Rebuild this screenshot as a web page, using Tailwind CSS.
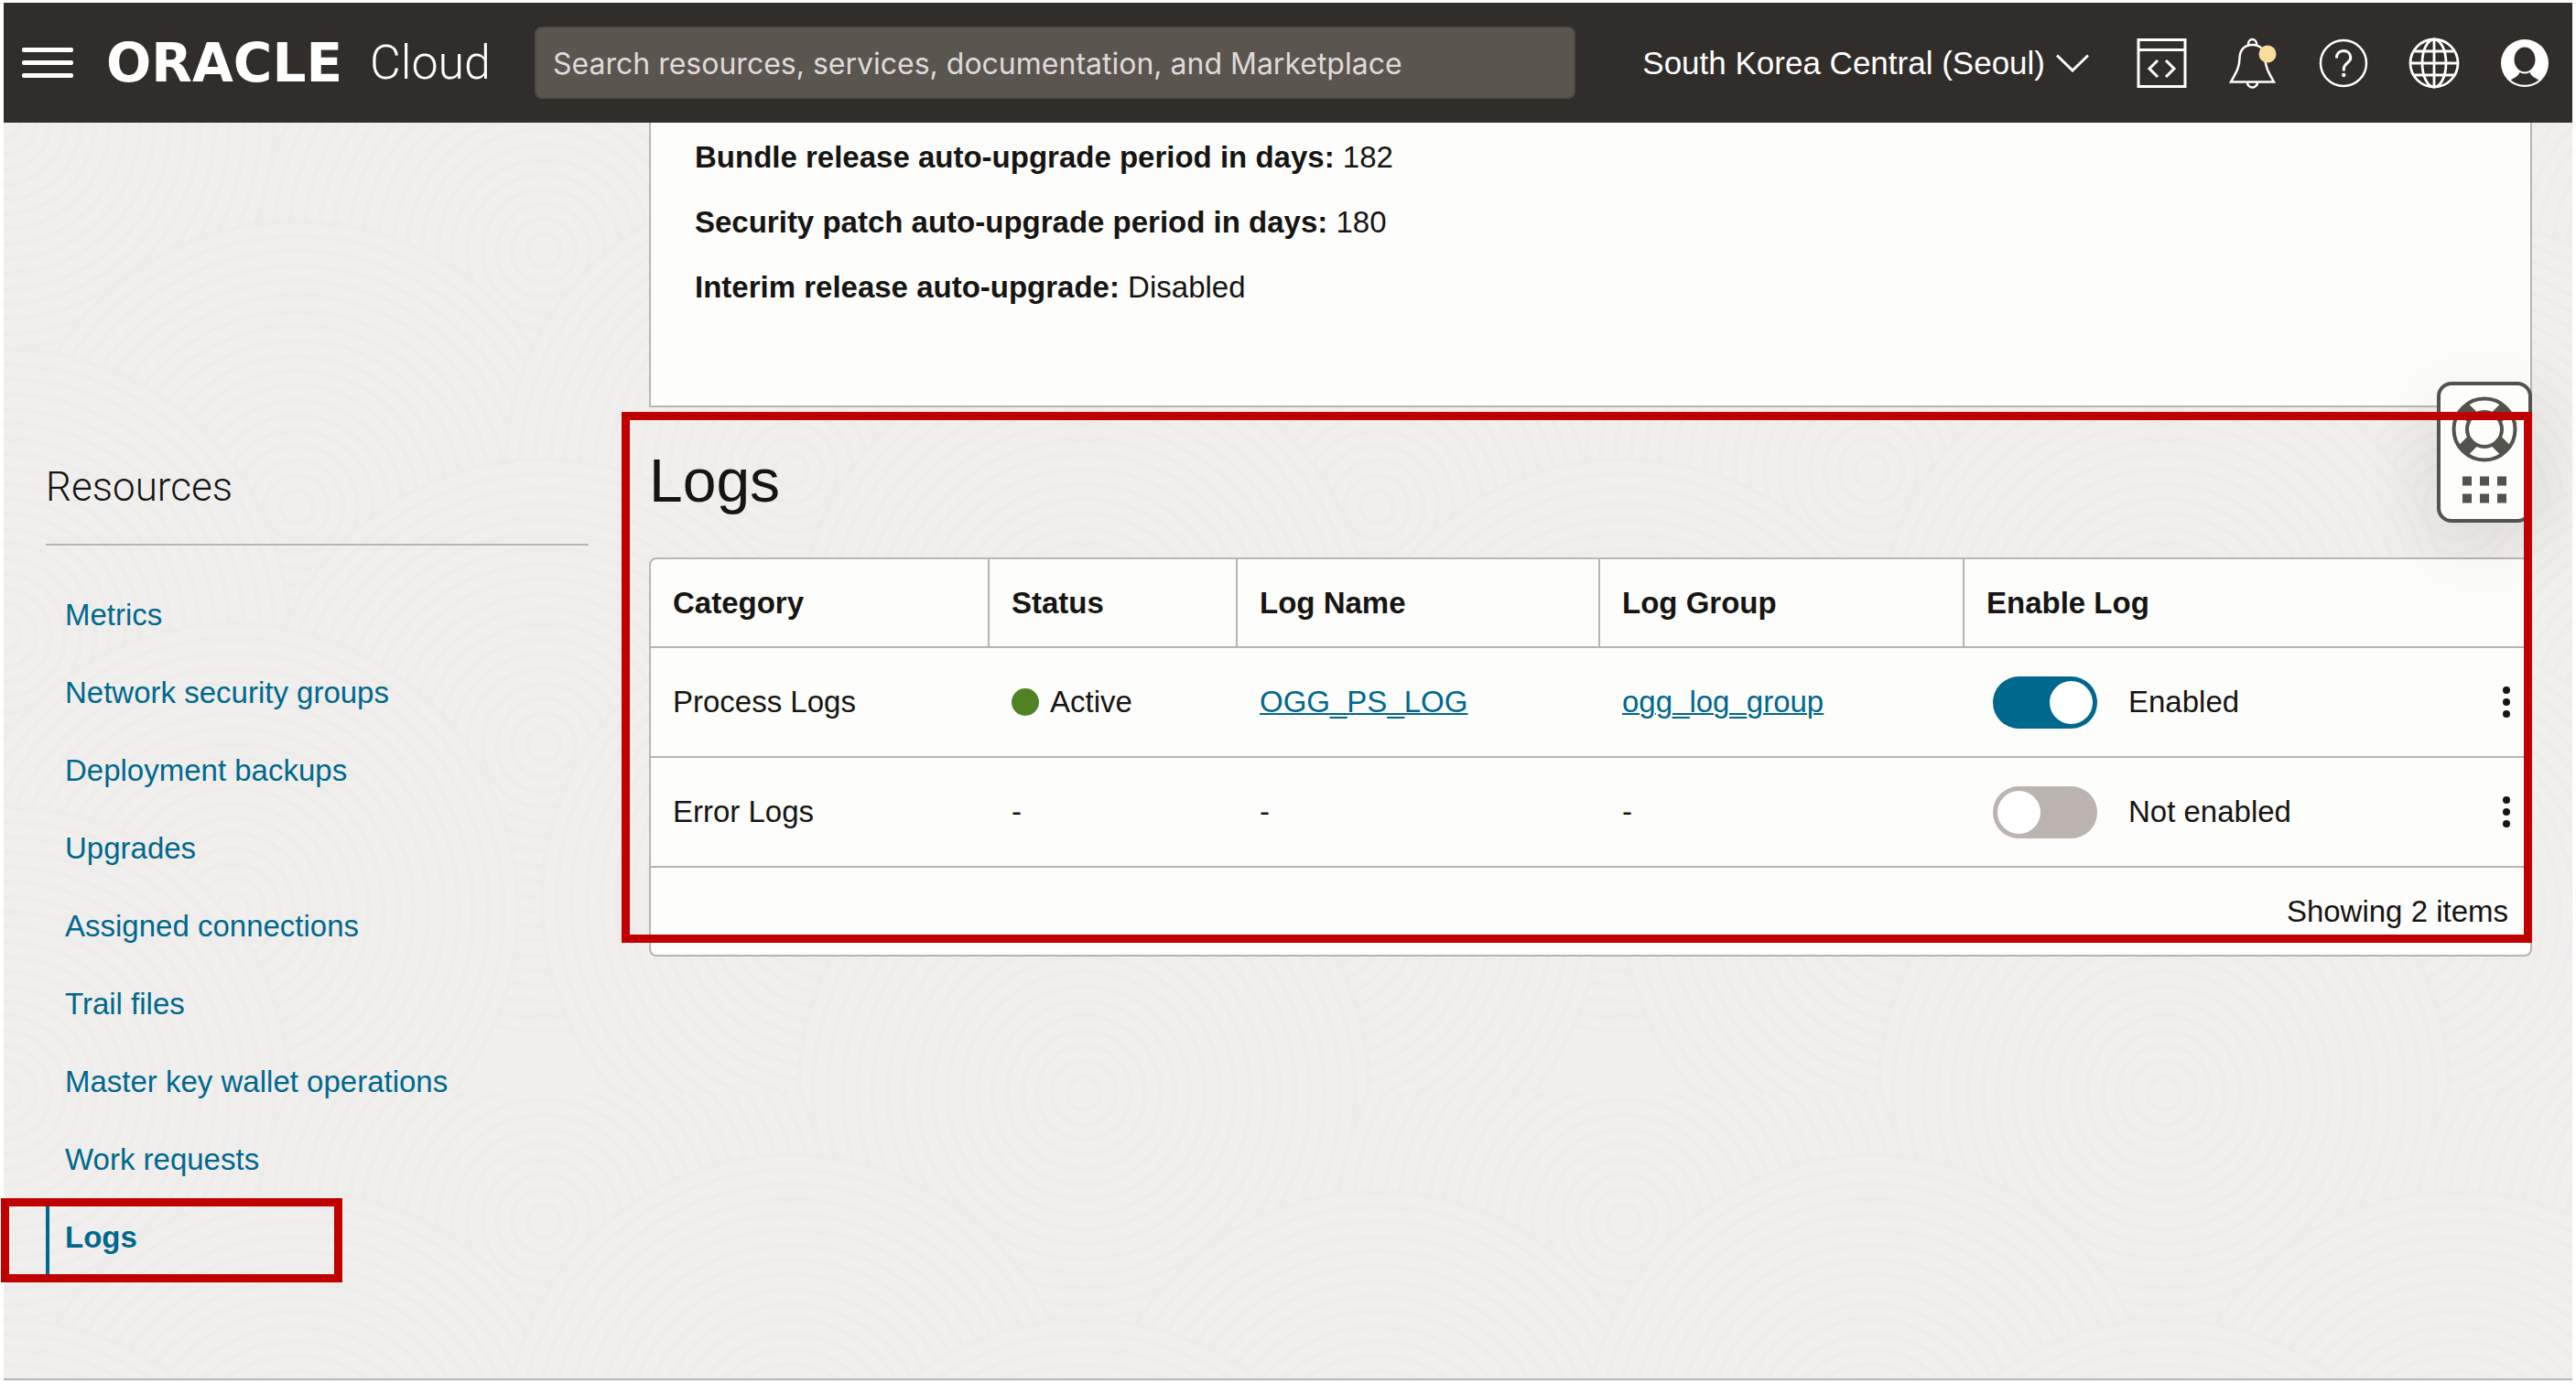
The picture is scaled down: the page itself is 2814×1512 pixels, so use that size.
<!DOCTYPE html>
<html lang="en">
<head>
<meta charset="utf-8">
<title>Oracle Cloud - Deployment logs</title>
<script src="https://cdn.jsdelivr.net/npm/@tailwindcss/browser@4"></script>
</head>
<body class="bg-white">
<div class="flex min-h-screen flex-col px-1 pt-[3px] pb-1 font-['Helvetica_Neue','Liberation_Sans',Arial,sans-serif] text-[33px] leading-10 text-[#161513]">

  <header class="flex h-[131px] shrink-0 items-center bg-[#312d2a] pr-6 pl-5 text-white">
    <button type="button" aria-label="Open navigation menu" class="flex w-14 flex-col gap-[9px]">
      <span class="h-[5px] w-full rounded-xs bg-white"></span>
      <span class="h-[5px] w-full rounded-xs bg-white"></span>
      <span class="h-[5px] w-full rounded-xs bg-white"></span>
    </button>
    <a href="#" class="ml-9 flex w-[420px] items-center justify-between leading-[60px] whitespace-nowrap">
      <span class="font-['DejaVu_Sans',sans-serif] text-[58px] font-bold">ORACLE</span>
      <span class="font-[Roboto,sans-serif] text-[52px] font-light">Cloud</span>
    </a>
    <input type="search" aria-label="Search" placeholder="Search resources, services, documentation, and Marketplace" class="ml-12 h-[79px] w-[1137px] rounded-lg border-2 border-[#4f4a46] bg-[#5b5550] px-[18px] pt-0.5 font-[Inter,sans-serif] text-[32px] text-white placeholder:text-[#dedbd8]">
    <button type="button" class="ml-auto flex items-center gap-3 text-[35px] whitespace-nowrap">
      South Korea Central (Seoul)
      <svg class="h-5 w-9" viewBox="0 0 36 20" fill="none" stroke="currentColor" stroke-width="3"><path d="M1 1.5 18 18 35 1.5"/></svg>
    </button>
    <div class="ml-[52px] flex items-center gap-[43px]">
      <button type="button" aria-label="Developer tools"><svg class="size-14" viewBox="0 0 56 56" fill="none" stroke="currentColor" stroke-width="3"><path d="M2 2.500h51v51H2zM2 13.500h51M23 25l-9 9 9 9M32 25l9 9-9 9"/></svg></button>
      <button type="button" aria-label="Announcements"><svg class="size-14" viewBox="0 0 56 56" fill="none" stroke="currentColor" stroke-width="2.500"><path d="M23 8.500V7a4.500 5 0 0 1 9 0v1.500M4 48.500h47C45 38 41.500 32 41.500 23c0-9-5-15-14-15s-14 6-14 15c0 9-3.500 15-9.500 25.500zM22 49a5.500 5.500 0 0 0 11 0"/><circle cx="44" cy="18" r="9.500" fill="#f9dd9b" stroke="none"/></svg></button>
      <button type="button" aria-label="Help"><svg class="size-14" viewBox="0 0 56 56" fill="none" stroke="currentColor" stroke-width="2.500"><circle cx="28" cy="28" r="25"/><path d="M20.500 22.500c0-5 3-8 7.500-8s7.800 3 7.800 7.500c0 6-7.500 6-7.500 12.500v2" stroke-width="3"/><circle cx="28.300" cy="41" r="2.200" fill="currentColor" stroke="none"/></svg></button>
      <button type="button" aria-label="Language"><svg class="size-14" viewBox="0 0 56 56" fill="none" stroke="currentColor" stroke-width="2.800"><circle cx="28" cy="28" r="26"/><ellipse cx="28" cy="28" rx="13" ry="26"/><path d="M28 2v52M2 28h52M6.500 15h43M6.500 41h43"/></svg></button>
      <button type="button" aria-label="Profile"><svg class="size-14" viewBox="0 0 56 56"><circle cx="28" cy="28" r="26" fill="#fff"/><ellipse cx="28" cy="24" rx="11.500" ry="13.500" fill="#312d2a"/><path d="M22.500 38q5.500 3 11 0c1.500 4.500 5.500 5.500 9.800 8.500a24.500 24.500 0 0 1-30.600 0c4.300-3 8.300-4 9.800-8.500z" fill="#312d2a"/></svg></button>
    </div>
  </header>

  <div class="relative isolate flex flex-1 gap-[66px] border-b-2 border-[#bbb4b0] bg-[#f0efee] pr-[44px] pl-[46px]">
    <!-- faint ripple texture -->
    <svg class="absolute inset-0 -z-10 size-full" aria-hidden="true">
      <defs>
        <g id="ripple" fill="none" stroke="#edeceb" stroke-width="5">
          <circle r="312" fill="#f0efee"/><circle r="296"/><circle r="280"/><circle r="263"/><circle r="247"/><circle r="231"/><circle r="214"/><circle r="198"/><circle r="182"/><circle r="165"/><circle r="149"/><circle r="133"/><circle r="116"/><circle r="100"/><circle r="84"/><circle r="67"/><circle r="51"/><circle r="35"/><circle r="18"/>
        </g>
        <pattern id="ripples" width="1180" height="1060" patternUnits="userSpaceOnUse">
          <use href="#ripple" x="0" y="0"/><use href="#ripple" x="1180" y="0"/><use href="#ripple" x="590" y="140"/>
          <use href="#ripple" x="320" y="420"/><use href="#ripple" x="860" y="380"/>
          <use href="#ripple" x="0" y="560"/><use href="#ripple" x="1180" y="560"/><use href="#ripple" x="590" y="680"/>
          <use href="#ripple" x="250" y="860"/><use href="#ripple" x="900" y="850"/>
          <use href="#ripple" x="0" y="1060"/><use href="#ripple" x="1180" y="1060"/>
        </pattern>
      </defs>
      <rect width="100%" height="100%" fill="url(#ripples)"/>
    </svg>

    <aside class="w-[593px] shrink-0 pt-[371px]">
      <h2 class="h-[91px] border-b-2 border-[#bbb4b0] font-[Roboto,sans-serif] text-[44px] leading-[54px] font-light">Resources</h2>
      <nav aria-label="Resources" class="mt-[33px] text-[#00688c]">
        <ul class="leading-[85px]">
          <li><a href="#" class="block pl-[21px]">Metrics</a></li>
          <li><a href="#" class="block pl-[21px]">Network security groups</a></li>
          <li><a href="#" class="block pl-[21px]">Deployment backups</a></li>
          <li><a href="#" class="block pl-[21px]">Upgrades</a></li>
          <li><a href="#" class="block pl-[21px]">Assigned connections</a></li>
          <li><a href="#" class="block pl-[21px]">Trail files</a></li>
          <li><a href="#" class="block pl-[21px]">Master key wallet operations</a></li>
          <li><a href="#" class="block pl-[21px]">Work requests</a></li>
          <li class="relative">
            <a href="#" aria-current="page" class="block border-l-4 border-[#00688c] pl-[17px] font-bold">Logs</a>
            <div class="pointer-events-none absolute top-0 -left-[49px] h-[92px] w-[373px] border-9 border-[#c00000]"></div>
          </li>
        </ul>
      </nav>
    </aside>

    <main class="min-w-0 flex-1">
      <section class="h-[311px] border-2 border-t-0 border-[#bbb4b0] bg-[#fdfdfb] pt-0.5 pl-12 leading-[71px]">
        <p><strong>Bundle release auto-upgrade period in days:</strong> 182</p>
        <p><strong>Security patch auto-upgrade period in days:</strong> 180</p>
        <p><strong>Interim release auto-upgrade:</strong> Disabled</p>
      </section>

      <section class="relative pt-[42px]">
        <h1 class="h-[122px] text-[66px] leading-[76px]">Logs</h1>
        <div class="rounded-lg border-2 border-[#bbb4b0] bg-[#fdfdfb]">
          <table class="w-full table-fixed border-separate border-spacing-0 text-left">
            <colgroup><col class="w-[370px]"><col class="w-[271px]"><col class="w-[396px]"><col class="w-[398px]"><col><col class="w-20"></colgroup>
            <thead>
              <tr class="h-[97px]">
                <th scope="col" class="border-r-2 border-b-2 border-[#bbb4b0] px-6">Category</th>
                <th scope="col" class="border-r-2 border-b-2 border-[#bbb4b0] px-6">Status</th>
                <th scope="col" class="border-r-2 border-b-2 border-[#bbb4b0] px-6">Log Name</th>
                <th scope="col" class="border-r-2 border-b-2 border-[#bbb4b0] px-6">Log Group</th>
                <th scope="col" colspan="2" class="border-b-2 border-[#bbb4b0] px-6">Enable Log</th>
              </tr>
            </thead>
            <tbody>
              <tr class="h-[120px]">
                <td class="border-b-2 border-[#bbb4b0] px-6">Process Logs</td>
                <td class="border-b-2 border-[#bbb4b0] px-6"><div class="flex items-center gap-3"><span class="size-[30px] rounded-full bg-[#508223]"></span>Active</div></td>
                <td class="border-b-2 border-[#bbb4b0] px-6"><a href="#" class="text-[#00688c] underline decoration-2">OGG_PS_LOG</a></td>
                <td class="border-b-2 border-[#bbb4b0] px-6"><a href="#" class="text-[#00688c] underline decoration-2">ogg_log_group</a></td>
                <td class="border-b-2 border-[#bbb4b0] pl-[31px]"><label class="flex items-center gap-[34px]"><input type="checkbox" role="switch" checked class="h-[57px] w-[114px] shrink-0 appearance-none rounded-full bg-[#bbb4b0] p-[5px] before:block before:size-[47px] before:rounded-full before:bg-white checked:bg-[#00688c] checked:before:ml-auto">Enabled</label></td>
                <td class="border-b-2 border-[#bbb4b0] pr-5"><button type="button" aria-label="Actions for Process Logs" class="ml-auto flex w-3 flex-col items-center gap-[5px]"><span class="size-2 rounded-full bg-[#161513]"></span><span class="size-2 rounded-full bg-[#161513]"></span><span class="size-2 rounded-full bg-[#161513]"></span></button></td>
              </tr>
              <tr class="h-[120px]">
                <td class="border-b-2 border-[#bbb4b0] px-6">Error Logs</td>
                <td class="border-b-2 border-[#bbb4b0] px-6">-</td>
                <td class="border-b-2 border-[#bbb4b0] px-6">-</td>
                <td class="border-b-2 border-[#bbb4b0] px-6">-</td>
                <td class="border-b-2 border-[#bbb4b0] pl-[31px]"><label class="flex items-center gap-[34px]"><input type="checkbox" role="switch" class="h-[57px] w-[114px] shrink-0 appearance-none rounded-full bg-[#bbb4b0] p-[5px] before:block before:size-[47px] before:rounded-full before:bg-white checked:bg-[#00688c] checked:before:ml-auto">Not enabled</label></td>
                <td class="border-b-2 border-[#bbb4b0] pr-5"><button type="button" aria-label="Actions for Error Logs" class="ml-auto flex w-3 flex-col items-center gap-[5px]"><span class="size-2 rounded-full bg-[#161513]"></span><span class="size-2 rounded-full bg-[#161513]"></span><span class="size-2 rounded-full bg-[#161513]"></span></button></td>
              </tr>
            </tbody>
          </table>
          <p class="flex h-[95px] items-center justify-end pr-6">Showing 2 items</p>
        </div>

        <!-- floating support widget -->
        <button type="button" aria-label="Support" class="absolute -top-7 right-0 h-[154px] w-[104px] rounded-2xl border-4 border-[#53524c] bg-[#fdfdfb] shadow-[0_20px_80px_rgba(0,0,0,0.1)]">
          <svg class="size-full" viewBox="0 0 96 146">
            <g fill="none" stroke="#53524c">
              <circle cx="48" cy="48" r="33.500" stroke-width="4"/>
              <circle cx="48" cy="48" r="19" stroke-width="4"/>
              <g stroke-width="15"><path d="M34.500 34.500 25 25M61.500 34.500 71 25M34.500 61.500 25 71M61.500 61.500 71 71"/></g>
            </g>
            <path fill="#53524c" d="M24 99.500h10v10H24zM43 99.500h10v10H43zM62 99.500h10v10H62zM24 118.500h10v10H24zM43 118.500h10v10H43zM62 118.500h10v10H62z"/>
          </svg>
        </button>
        <div class="pointer-events-none absolute top-[5px] right-0 -left-[30px] h-[580px] border-9 border-[#c00000]"></div>
      </section>
    </main>
  </div>
</div>
</body>
</html>
